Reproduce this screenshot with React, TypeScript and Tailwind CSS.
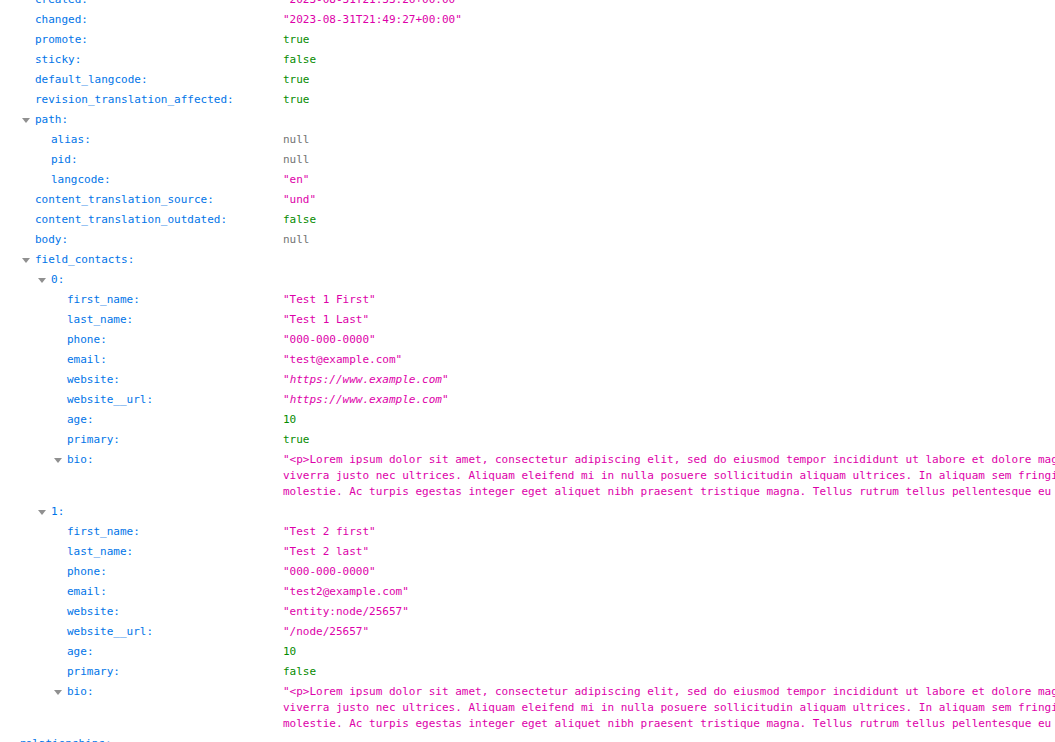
type Kind = "str" | "url" | "bool" | "num" | "null" | "none";

type Row = {
  level: number;
  k: string;
  v?: string | string[];
  kind: Kind;
  open?: boolean;
};

const bio = [
  "\"<p>Lorem ipsum dolor sit amet, consectetur adipiscing elit, sed do eiusmod tempor incididunt ut labore et dolore magna aliqua. Faucibus",
  "viverra justo nec ultrices. Aliquam eleifend mi in nulla posuere sollicitudin aliquam ultrices. In aliquam sem fringilla ut morbi tincidunt",
  "molestie. Ac turpis egestas integer eget aliquet nibh praesent tristique magna. Tellus rutrum tellus pellentesque eu tincidunt tortor aliquam",
];

const rows: Row[] = [
  { level: 1, k: "created", v: "\"2023-08-31T21:33:26+00:00\"", kind: "str" },
  { level: 1, k: "changed", v: "\"2023-08-31T21:49:27+00:00\"", kind: "str" },
  { level: 1, k: "promote", v: "true", kind: "bool" },
  { level: 1, k: "sticky", v: "false", kind: "bool" },
  { level: 1, k: "default_langcode", v: "true", kind: "bool" },
  { level: 1, k: "revision_translation_affected", v: "true", kind: "bool" },
  { level: 1, k: "path", kind: "none", open: true },
  { level: 2, k: "alias", v: "null", kind: "null" },
  { level: 2, k: "pid", v: "null", kind: "null" },
  { level: 2, k: "langcode", v: "\"en\"", kind: "str" },
  { level: 1, k: "content_translation_source", v: "\"und\"", kind: "str" },
  { level: 1, k: "content_translation_outdated", v: "false", kind: "bool" },
  { level: 1, k: "body", v: "null", kind: "null" },
  { level: 1, k: "field_contacts", kind: "none", open: true },
  { level: 2, k: "0", kind: "none", open: true },
  { level: 3, k: "first_name", v: "\"Test 1 First\"", kind: "str" },
  { level: 3, k: "last_name", v: "\"Test 1 Last\"", kind: "str" },
  { level: 3, k: "phone", v: "\"000-000-0000\"", kind: "str" },
  { level: 3, k: "email", v: "\"test@example.com\"", kind: "str" },
  { level: 3, k: "website", v: "https://www.example.com", kind: "url" },
  { level: 3, k: "website__url", v: "https://www.example.com", kind: "url" },
  { level: 3, k: "age", v: "10", kind: "num" },
  { level: 3, k: "primary", v: "true", kind: "bool" },
  { level: 3, k: "bio", v: bio, kind: "str", open: true },
  { level: 2, k: "1", kind: "none", open: true },
  { level: 3, k: "first_name", v: "\"Test 2 first\"", kind: "str" },
  { level: 3, k: "last_name", v: "\"Test 2 last\"", kind: "str" },
  { level: 3, k: "phone", v: "\"000-000-0000\"", kind: "str" },
  { level: 3, k: "email", v: "\"test2@example.com\"", kind: "str" },
  { level: 3, k: "website", v: "\"entity:node/25657\"", kind: "str" },
  { level: 3, k: "website__url", v: "\"/node/25657\"", kind: "str" },
  { level: 3, k: "age", v: "10", kind: "num" },
  { level: 3, k: "primary", v: "false", kind: "bool" },
  { level: 3, k: "bio", v: bio, kind: "str", open: true },
  { level: 0, k: "relationships", kind: "none", open: true },
];

const padPlain = ["pl-[19px]", "pl-[35px]", "pl-[51px]", "pl-[67px]"];
const padTwisty = ["pl-[6px]", "pl-[22px]", "pl-[38px]", "pl-[54px]"];

const color: Record<Kind, string> = {
  str: "text-[#dd00a9]",
  url: "text-[#dd00a9] italic",
  bool: "text-[#058b00]",
  num: "text-[#058b00]",
  null: "text-[#737373]",
  none: "",
};

function Twisty() {
  return (
    <svg width="8" height="5" viewBox="0 0 8 5" className="mr-[5px] shrink-0">
      <path d="M0 0 L8 0 L4 5 Z" fill="#909090" />
    </svg>
  );
}

function JsonRow({ r }: { r: Row }) {
  const lines = Array.isArray(r.v) ? r.v : r.v ? [r.v] : [];
  return (
    <div className="flex py-[2px] leading-4">
      <div
        className={`flex h-4 w-[283px] shrink-0 items-center text-[#0074e8] ${
          r.open ? padTwisty[r.level] : padPlain[r.level]
        }`}
      >
        {r.open && <Twisty />}
        <span className="whitespace-pre">{r.k}:</span>
      </div>
      <div className={`flex flex-col whitespace-pre ${color[r.kind]}`}>
        {lines.map((l, i) => (
          <span key={i}>{r.kind === "url" ? `"` : ""}{l}{r.kind === "url" ? `"` : ""}</span>
        ))}
      </div>
    </div>
  );
}

export default function App() {
  return (
    <div className="h-[742px] w-[1055px] overflow-hidden bg-white font-['DejaVu_Sans_Mono',monospace] text-[11px]">
      <div className="-mt-[10px] flex flex-col">
        {rows.map((r, i) => (
          <JsonRow key={i} r={r} />
        ))}
      </div>
    </div>
  );
}
